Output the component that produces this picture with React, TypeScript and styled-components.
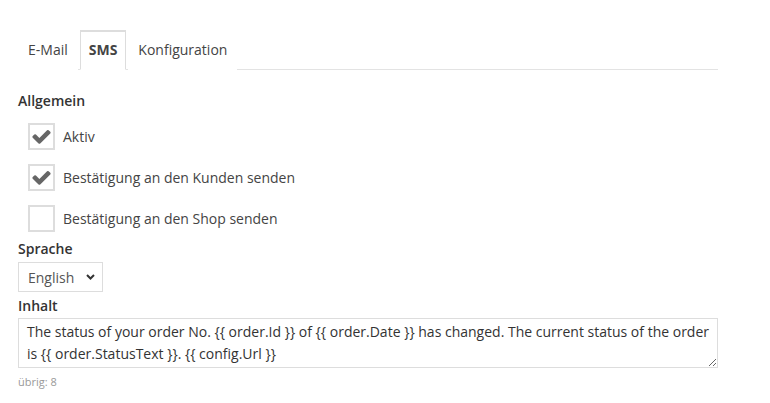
import React from "react";
import styled, { createGlobalStyle } from "styled-components";

const Global = createGlobalStyle`
  html, body { margin: 0; padding: 0; background: #fff; }
  body { font-family: "Open Sans", "Noto Sans", sans-serif; font-size: 14px; color: #333; }
`;

const Page = styled.div`
  width: 700px;
  margin: 30px 0 0 18px;
`;

const TabList = styled.ul`
  display: flex;
  list-style: none;
  margin: 0;
  padding: 0;
  border-bottom: 1px solid #e3e3e3;
  height: 39px;
`;

const Tab = styled.li<{ $active?: boolean }>`
  margin: 0 2px -1px 0;
  padding: ${(p) => (p.$active ? "8px 8px 9px" : "9px 9px")};
  line-height: 20px;
  border: 1px solid ${(p) => (p.$active ? "#ddd" : "transparent")};
  border-top-width: ${(p) => (p.$active ? "2px" : "1px")};
  border-bottom-color: ${(p) => (p.$active ? "#fff" : "transparent")};
  background: #fff;
  font-weight: ${(p) => (p.$active ? 700 : 400)};
  color: #444;
  cursor: pointer;
`;

const Section = styled.div`
  padding-top: 21px;
`;

const Label = styled.div<{ $mt?: number }>`
  font-weight: 600;
  line-height: 20px;
  color: #333;
  margin-top: ${(p) => p.$mt ?? 0}px;
`;

const CheckList = styled.div`
  display: flex;
  flex-direction: column;
  gap: 14px;
  margin: 12px 0 0 10px;
`;

const CheckRow = styled.label`
  display: flex;
  align-items: center;
  gap: 8px;
  color: #444;
  line-height: 20px;
`;

const Box = styled.span`
  width: 23px;
  height: 23px;
  border: 2px solid #ddd;
  display: flex;
  align-items: center;
  justify-content: center;
  background: #fff;
`;

const SelectBox = styled.div`
  margin-top: 3px;
  width: 85px;
  height: 30px;
  border: 1px solid #ddd;
  display: flex;
  align-items: center;
  justify-content: space-between;
  padding: 0 7px 0 9px;
  box-sizing: border-box;
  color: #555;
`;

const TextArea = styled.textarea`
  display: block;
  margin-top: 2px;
  width: 700px;
  height: 50px;
  box-sizing: border-box;
  border: 1px solid #ddd;
  padding: 2px 8px;
  font-family: "Open Sans", "Noto Sans", sans-serif;
  font-size: 14px;
  line-height: 22px;
  color: #333;
  outline: none;
`;

const Hint = styled.div`
  margin-top: 6px;
  font-size: 11px;
  line-height: 16px;
  color: #999;
`;

const Check = () => (
  <svg width="21" height="21" viewBox="0 0 1792 1792">
    <path
      fill="#666"
      d="M1671 566q0 40-28 68l-724 724-136 136q-28 28-68 28t-68-28l-136-136-362-362q-28-28-28-68t28-68l136-136q28-28 68-28t68 28l294 295 656-657q28-28 68-28t68 28l136 136q28 28 28 68z"
    />
  </svg>
);

const Chevron = () => (
  <svg width="9" height="6" viewBox="0 0 9 6">
    <path d="M1 1 L4.5 4.5 L8 1" fill="none" stroke="#333" strokeWidth="2" />
  </svg>
);

const items = [
  { text: "Aktiv", checked: true },
  { text: "Bestätigung an den Kunden senden", checked: true },
  { text: "Bestätigung an den Shop senden", checked: false },
];

export default function App() {
  return (
    <>
      <Global />
      <Page>
        <TabList>
          <Tab>E-Mail</Tab>
          <Tab $active>SMS</Tab>
          <Tab>Konfiguration</Tab>
        </TabList>
        <Section>
          <Label>Allgemein</Label>
          <CheckList>
            {items.map((it) => (
              <CheckRow key={it.text}>
                <Box>{it.checked && <Check />}</Box>
                {it.text}
              </CheckRow>
            ))}
          </CheckList>
          <Label $mt={7}>Sprache</Label>
          <SelectBox>
            <span>English</span>
            <Chevron />
          </SelectBox>
          <Label $mt={4}>Inhalt</Label>
          <TextArea
            readOnly
            defaultValue="The status of your order No. {{ order.Id }} of {{ order.Date }} has changed. The current status of the order is {{ order.StatusText }}. {{ config.Url }}"
          />
          <Hint>übrig: 8</Hint>
        </Section>
      </Page>
    </>
  );
}
